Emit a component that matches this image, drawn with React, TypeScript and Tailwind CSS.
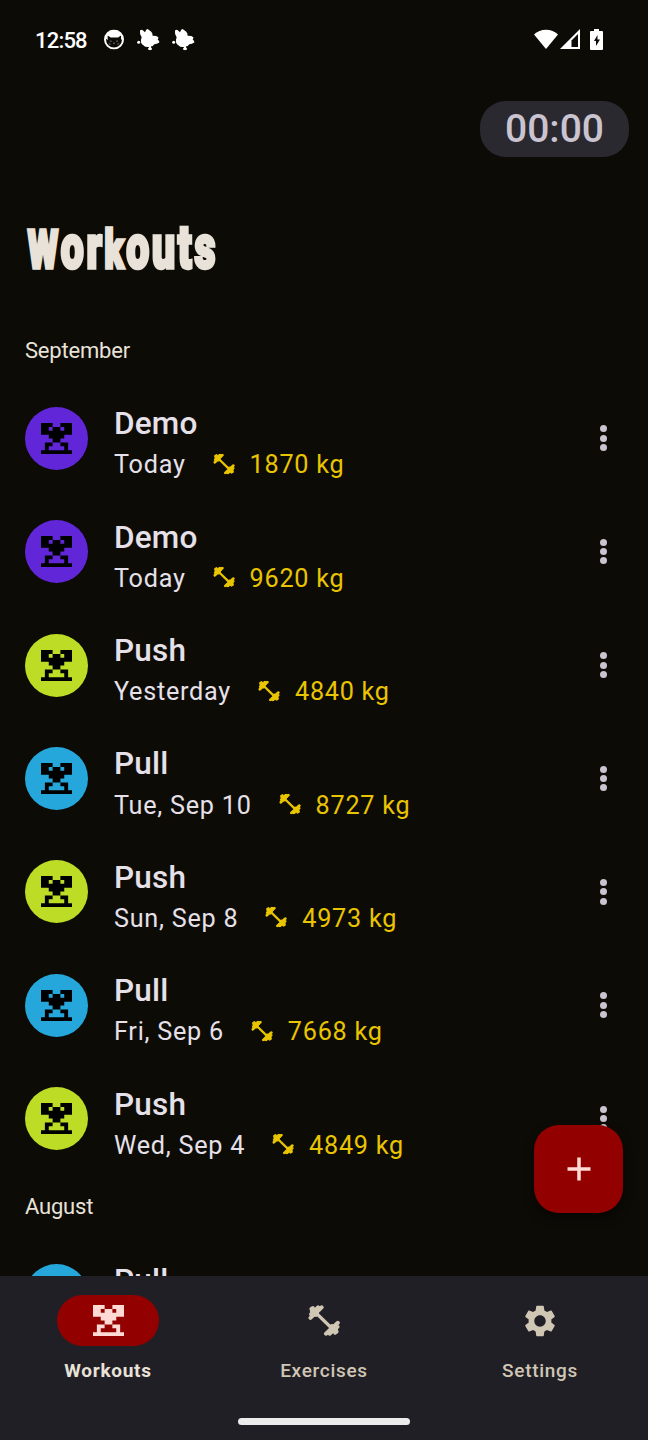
import React from "react";
import { MdSettings } from "react-icons/md";

type Workout = {
  name: string;
  date?: string;
  weight?: string;
  color: string;
};

const september: Workout[] = [
  { name: "Demo", date: "Today", weight: "1870 kg", color: "bg-[#6226d9]" },
  { name: "Demo", date: "Today", weight: "9620 kg", color: "bg-[#6226d9]" },
  { name: "Push", date: "Yesterday", weight: "4840 kg", color: "bg-[#bcdc26]" },
  { name: "Pull", date: "Tue, Sep 10", weight: "8727 kg", color: "bg-[#26a7dc]" },
  { name: "Push", date: "Sun, Sep 8", weight: "4973 kg", color: "bg-[#bcdc26]" },
  { name: "Pull", date: "Fri, Sep 6", weight: "7668 kg", color: "bg-[#26a7dc]" },
  { name: "Push", date: "Wed, Sep 4", weight: "4849 kg", color: "bg-[#bcdc26]" },
];

const august: Workout[] = [{ name: "Pull", color: "bg-[#26a7dc]" }];

const LifterIcon: React.FC = () => (
  <svg viewBox="0 0 8 8" className="size-[31px]" fill="currentColor">
    <path d="M0 0h3v1H2v1h1V1h2v1h1V1H5V0h3v3H6v1H5v1H3V4H2V3H0z" />
    <path d="M1 5h2v1H2v1h4V6H5V5h2v2h1v1H0V7h1z" />
  </svg>
);

const BarbellIcon: React.FC<{ className: string }> = ({ className }) => (
  <svg viewBox="0 0 96 94" className={className} fill="none" stroke="currentColor" strokeLinecap="round">
    <path d="M26 26l44 43" strokeWidth="10" />
    <path d="M7 39L41 7M9 28L30 7M10 12l4-3" strokeWidth="12" />
    <path d="M14 18l10 9M17 26l14-13" strokeWidth="17" />
    <path d="M54 87l36-33M65 87l24-21M82 84l4-3" strokeWidth="12" />
    <path d="M82 76l-10-9M65 81l14-13" strokeWidth="17" />
  </svg>
);

const PuffIcon: React.FC = () => (
  <svg viewBox="0 0 69 66" className="h-[22px] w-[23px]" fill="#fff">
    <path d="M9 6Q14 1 19 7L24 11Q28 0 33 2L42 9Q47 13 47 22Q60 22 64 26Q65 30 62 33Q68 37 67 42Q60 47 52 47Q48 55 38 55Q26 58 19 50Q10 46 12 34L14 26Q7 16 9 6z" />
    <circle cx="5" cy="41" r="4.500" />
    <ellipse cx="39" cy="61" rx="6" ry="4.500" />
    <path d="M36 52h6v8h-6z" />
  </svg>
);

const StatusBar: React.FC = () => (
  <div className="flex h-20 items-center justify-between pl-[35px] pr-[44px]">
    <div className="flex -translate-y-[0.500px] items-center">
      <span className="w-[69px] text-[22px] font-medium tracking-[-0.8px] text-white">12:58</span>
      <svg viewBox="0 0 60 60" className="mr-[13px] size-5">
        <circle cx="30" cy="30" r="27" fill="#0c0b06" stroke="#fff" strokeWidth="6" />
        <path d="M5 26C8 10 18 4 30 4s22 6 25 22l-4 6V18l-9 6H20l-9-6v14z" fill="#fff" />
        <path d="M17 35h6M36 35h6M27 41h6M14 43l6 1M40 44l6-1" stroke="#888" strokeWidth="2.500" />
      </svg>
      <div className="flex gap-[12px]">
        <PuffIcon />
        <PuffIcon />
      </div>
    </div>
    <div className="flex -translate-x-px items-center">
      <svg viewBox="0 0 24 20" className="mr-[2px] h-5 w-6 -translate-y-px" fill="#fff">
        <path d="M0 5.500C6-1 18-1 24 5.500L12 20z" />
      </svg>
      <svg viewBox="0 0 20 20" className="mr-[10px] size-5 -translate-y-px">
        <path d="M0 20L20 0v20z" fill="#fff" />
        <path d="M11.500 11.500L18 5v13h-6.500z" fill="#0c0b06" />
      </svg>
      <svg viewBox="0 0 13 21" className="h-[21px] w-[13px] -translate-y-px">
        <path d="M4 0h5v2h3q1 0 1 1v17q0 1-1 1H1q-1 0-1-1V3q0-1 1-1h3z" fill="#fff" />
        <path d="M7.500 6L4 12h2v5l4-6.500H7.500z" fill="#0c0b06" />
      </svg>
    </div>
  </div>
);

const WorkoutRow: React.FC<{ workout: Workout }> = ({ workout }) => (
  <div className="flex h-[113.400px] shrink-0 items-center pl-[25px] pr-[26px]">
    <div className={`flex size-[63px] items-center justify-center rounded-full text-black ${workout.color}`}>
      <LifterIcon />
    </div>
    <div className="ml-[26px] flex-1 pt-[10px] text-[#e6e0e9]">
      <div className="text-[31.500px] font-medium leading-[44px] tracking-[0.2px]">{workout.name}</div>
      {workout.date ? (
        <div className="flex h-[38px] items-center text-[25.200px] tracking-[0.750px]">
          <span>{workout.date}</span>
          <BarbellIcon className="ml-[27px] mr-[15px] h-[21px] w-[22px] -translate-y-[1.500px] text-[#e9c400]" />
          <span className="text-[#e9c400]">{workout.weight}</span>
        </div>
      ) : (
        <div className="h-[38px]" />
      )}
    </div>
    <div className="flex w-[38px] flex-col items-center gap-[2.300px] text-[#cac4d0]">
      <i className="size-[7px] rounded-full bg-current" />
      <i className="size-[7px] rounded-full bg-current" />
      <i className="size-[7px] rounded-full bg-current" />
    </div>
  </div>
);

const MonthLabel: React.FC<{ children: React.ReactNode }> = ({ children }) => (
  <h2 className="flex h-[63px] shrink-0 items-center pl-[25px] text-[22px] tracking-[-0.2px] text-[#e9e2d8]">
    {children}
  </h2>
);

export default function App() {
  return (
    <div className="relative flex h-[1440px] w-[648px] flex-col overflow-hidden bg-[#0c0b06] font-['Roboto',sans-serif]">
      <StatusBar />
      <div className="mt-[21px] flex justify-end pr-[19px]">
        <div className="flex h-14 w-[149px] items-center justify-center rounded-[26px] bg-[#2b2930] pt-px text-[39px] font-medium text-[#cac4d0]">
          00:00
        </div>
      </div>
      <h1 className="mt-[58px] h-[63px] origin-left scale-x-[0.66] whitespace-nowrap pl-[42px] text-[62px] font-black leading-[63px] tracking-[4px] text-[#e9e2d8] [-webkit-text-stroke:3.500px_#e9e2d8]">
        <span className="text-[53px]">W</span>or<span className="text-[53px]">k</span>outs
      </h1>

      <main className="mt-[40.600px] flex min-h-0 flex-1 flex-col overflow-hidden">
        <MonthLabel>September</MonthLabel>
        {september.map((workout, i) => (
          <WorkoutRow key={i} workout={workout} />
        ))}
        <MonthLabel>August</MonthLabel>
        {august.map((workout, i) => (
          <WorkoutRow key={i} workout={workout} />
        ))}
      </main>

      <button className="absolute bottom-[227px] right-[25px] flex h-[88px] w-[89px] items-center justify-center rounded-[25px] bg-[#930000] text-[#ffdad4] shadow-[0_5px_10px_rgba(0,0,0,0.5)]">
        <svg viewBox="0 0 24 24" className="size-6" stroke="currentColor" strokeWidth="3.500">
          <path d="M12 .5v23M.5 12h23" />
        </svg>
      </button>

      <nav className="relative flex h-[164px] shrink-0 bg-[#211f26] pt-[19px] text-[19px] font-medium leading-6 tracking-[0.7px] text-[#cfc6b4]">
        <div className="flex flex-1 flex-col items-center">
          <div className="flex h-[51px] w-[102px] items-center justify-center rounded-full bg-[#930000] text-[#ffdad4]">
            <LifterIcon />
          </div>
          <span className="mt-[13px] font-bold text-[#e9e2d8]">Workouts</span>
        </div>
        <div className="flex flex-1 flex-col items-center">
          <div className="flex h-[51px] items-center justify-center">
            <BarbellIcon className="h-[31px] w-8" />
          </div>
          <span className="mt-[13px]">Exercises</span>
        </div>
        <div className="flex flex-1 flex-col items-center">
          <div className="flex h-[51px] items-center justify-center">
            <MdSettings size={38} />
          </div>
          <span className="mt-[13px]">Settings</span>
        </div>
        <div className="absolute bottom-[15.500px] left-[238px] h-[7px] w-[172px] rounded-full bg-[#ececec]" />
      </nav>
    </div>
  );
}
